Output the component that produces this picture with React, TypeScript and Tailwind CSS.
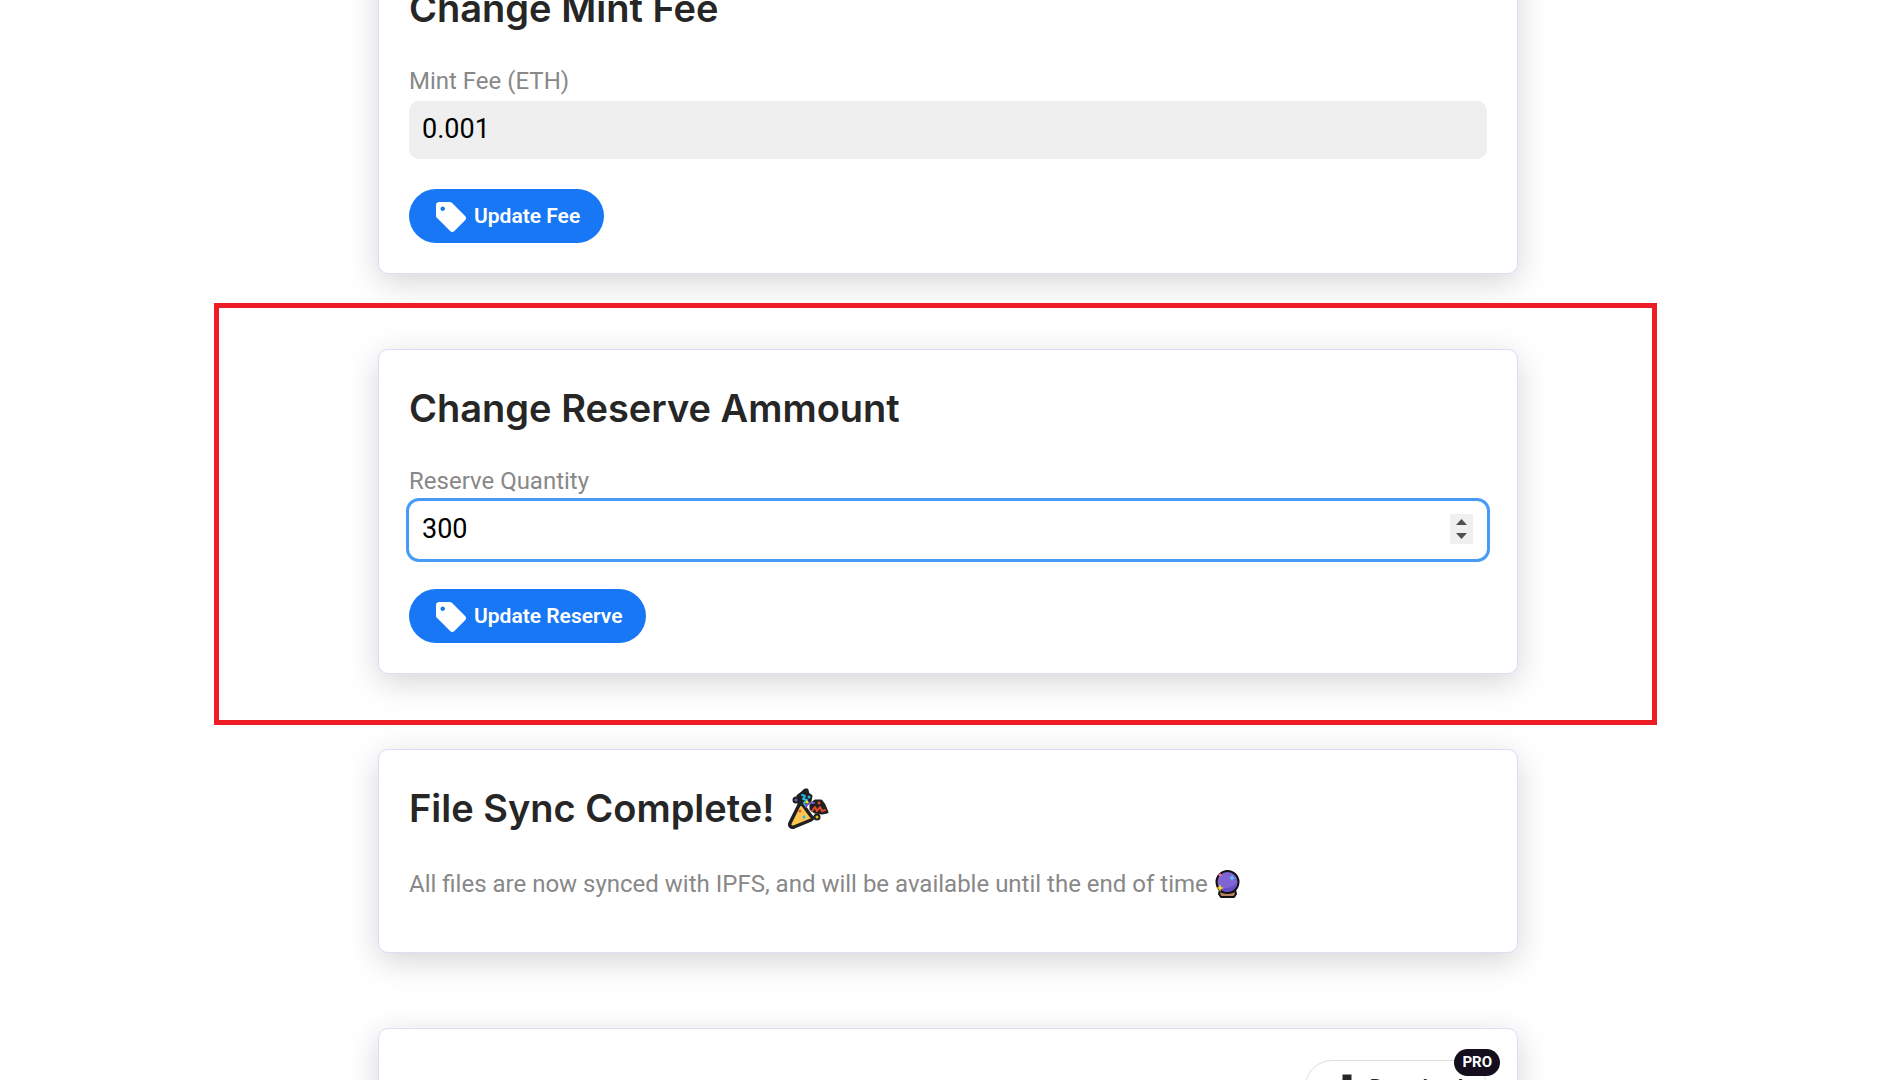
import { useState, type ReactNode } from "react";
import { MdDownload, MdSell } from "react-icons/md";

function Card({ children }: { children: ReactNode }) {
  return (
    <section className="rounded-[10px] border border-[#e0dcf8] bg-white p-[30px] shadow-[0_8px_32px_rgba(0,0,0,0.17)]">
      {children}
    </section>
  );
}

function Title({ children }: { children: ReactNode }) {
  return (
    <h2 className="flex items-center gap-3 whitespace-nowrap font-['Inter',sans-serif] text-[38px] leading-[56px] font-semibold text-[#262626]">
      {children}
    </h2>
  );
}

function PillButton({ children }: { children: ReactNode }) {
  return (
    <button
      type="button"
      className="mt-[30px] flex h-[54px] items-center gap-[5px] rounded-full bg-[#1877f5] px-6 pt-0.5 text-[21px] font-semibold text-white"
    >
      <MdSell size={36} aria-hidden="true" />
      {children}
    </button>
  );
}

function PartyPopper() {
  return (
    <svg width="42" height="42" viewBox="0 0 42 42" aria-label="party popper" role="img" strokeLinecap="round" strokeLinejoin="round">
      <path d="M11 9 15 6 18 3h2l1 4 3 2-1 5-4 3-6 1-2-4Z" fill="#202020" stroke="#202020" strokeWidth="3" />
      <path d="m24 18 4-4h6l3 4 3 7-5 1-7-1-4-3Z" fill="#202020" stroke="#202020" strokeWidth="3" />
      <path d="M12 18 3 36c-1 3 1 5 4 4l17-7c2-1 2-3 0-4l-8-11c-1-1-3-1-4 0Z" fill="#ffc64f" stroke="#202020" strokeWidth="3.5" />
      <path d="m15 8 3 1-2 3 4 1-3 3 1 2" fill="none" stroke="#27b8e8" strokeWidth="2" />
      <path d="M19 20c1-3 4-5 8-4" fill="none" stroke="#7657c9" strokeWidth="2" />
      <path d="m25 24 3-4 2 4 3-4 2 4 3-1" fill="none" stroke="#e9482c" strokeWidth="2" />
      <circle cx="9" cy="13" r="2.500" fill="#7657c9" stroke="#202020" strokeWidth="2" />
      <circle cx="22" cy="10" r="1.5" fill="#27b8e8" />
      <circle cx="20" cy="15" r="1.6" fill="#f8d91c" />
      <circle cx="32" cy="16" r="1.5" fill="#e9482c" />
      <circle cx="30" cy="30" r="2.500" fill="#d6cb1a" stroke="#202020" strokeWidth="2" />
      <circle cx="13" cy="24" r="1.5" fill="#f0502d" />
      <circle cx="17" cy="30" r="1.5" fill="#2dbbe5" />
    </svg>
  );
}

function CrystalBall() {
  return (
    <svg width="26" height="28" viewBox="0 0 26 28" aria-label="crystal ball" role="img" strokeLinejoin="round">
      <path d="M6 20h15l1 4-2 3H7l-2-3Z" fill="#b58463" stroke="#111" strokeWidth="2" />
      <path d="M6 21h15v2H6Z" fill="#5a3f33" />
      <circle cx="13.500" cy="12" r="11" fill="#8064d4" stroke="#111" strokeWidth="2" />
      <path d="M4 15c4 5 13 4 19-2-1 5-5 9-10 9S5 19 4 15Z" fill="#694bc4" />
      <path d="m18 5 1 2 2 1-2 1-1 2-1-2-2-1 2-1Z" fill="#57c6ff" />
      <path d="m6 3 1 1 1 1-1 1-1 1-1-1-1-1 1-1Z" fill="#ef6d94" />
      <path d="m6 14 1 3 3 1-3 1-1 3-1-3-3-1 3-1Z" fill="#ffdc19" />
    </svg>
  );
}

export default function App() {
  const [fee, setFee] = useState("0.001");
  const [quantity, setQuantity] = useState(300);

  return (
    <div className="h-screen overflow-hidden bg-white pl-[5px] font-['Roboto',sans-serif]">
      <main className="mx-auto -mt-[51px] flex max-w-[1140px] flex-col gap-[75px]">
        <Card>
          <Title>Change Mint Fee</Title>
          <label htmlFor="fee" className="mt-[27px] block text-[24px] leading-9 text-[#888]">
            Mint Fee (ETH)
          </label>
          <input
            id="fee"
            value={fee}
            onChange={(e) => setFee(e.target.value)}
            className="mt-0.5 block h-[58px] w-full rounded-[10px] bg-[#efefef] px-[13px] pb-0.5 text-[27px] text-black outline-none"
          />
          <PillButton>Update Fee</PillButton>
        </Card>

        <div className="relative">
          <Card>
            <Title>Change Reserve Ammount</Title>
            <label htmlFor="quantity" className="mt-[27px] block text-[24px] leading-9 text-[#888]">
              Reserve Quantity
            </label>
            <div className="mt-0.5 flex h-[58px] items-center rounded-[10px] bg-white pr-3.5 pl-[13px] ring-3 ring-[#479bf5]">
              <input
                id="quantity"
                type="number"
                value={quantity}
                onChange={(e) => setQuantity(Number(e.target.value))}
                className="h-full min-w-0 flex-1 appearance-none pb-0.5 text-[27px] text-black outline-none [&::-webkit-inner-spin-button]:appearance-none"
              />
              <div className="mb-0.5 flex h-[30px] w-[23px] flex-col bg-[#f0f0f0]">
                <button type="button" aria-label="Increase" onClick={() => setQuantity(quantity + 1)} className="flex flex-1 items-end justify-center pb-1">
                  <svg width="11" height="6" viewBox="0 0 11 6" fill="#505050"><path d="M0 6 5.500 0 11 6Z" /></svg>
                </button>
                <button type="button" aria-label="Decrease" onClick={() => setQuantity(quantity - 1)} className="flex flex-1 items-start justify-center pt-1">
                  <svg width="11" height="6" viewBox="0 0 11 6" fill="#505050"><path d="M0 0h11L5.500 6Z" /></svg>
                </button>
              </div>
            </div>
            <PillButton>Update Reserve</PillButton>
          </Card>
          <div className="pointer-events-none absolute -top-[46px] -right-[139px] -bottom-[51px] -left-[164px] border-5 border-[#ee1c25]" />
        </div>

        <Card>
          <Title>
            File Sync Complete! <PartyPopper />
          </Title>
          <p className="mt-[30px] mb-5 flex items-center gap-1.5 text-[24px] leading-9 text-[#888]">
            All files are now synced with IPFS, and will be available until the end of time <CrystalBall />
          </p>
        </Card>

        <Card>
          <div className="flex justify-end">
            <button
              type="button"
              className="relative mt-px flex h-[54px] items-center gap-[5px] rounded-full border border-[#ddd] px-[23px] pt-0.5 text-[21px] font-semibold text-[#262626]"
            >
              <MdDownload size={36} aria-hidden="true" />
              Download
              <span className="absolute -top-3 -right-3.5 flex h-[27px] items-center rounded-full bg-[#150f1d] px-2 text-[15px] font-bold text-white">
                PRO
              </span>
            </button>
          </div>
        </Card>
      </main>
    </div>
  );
}
